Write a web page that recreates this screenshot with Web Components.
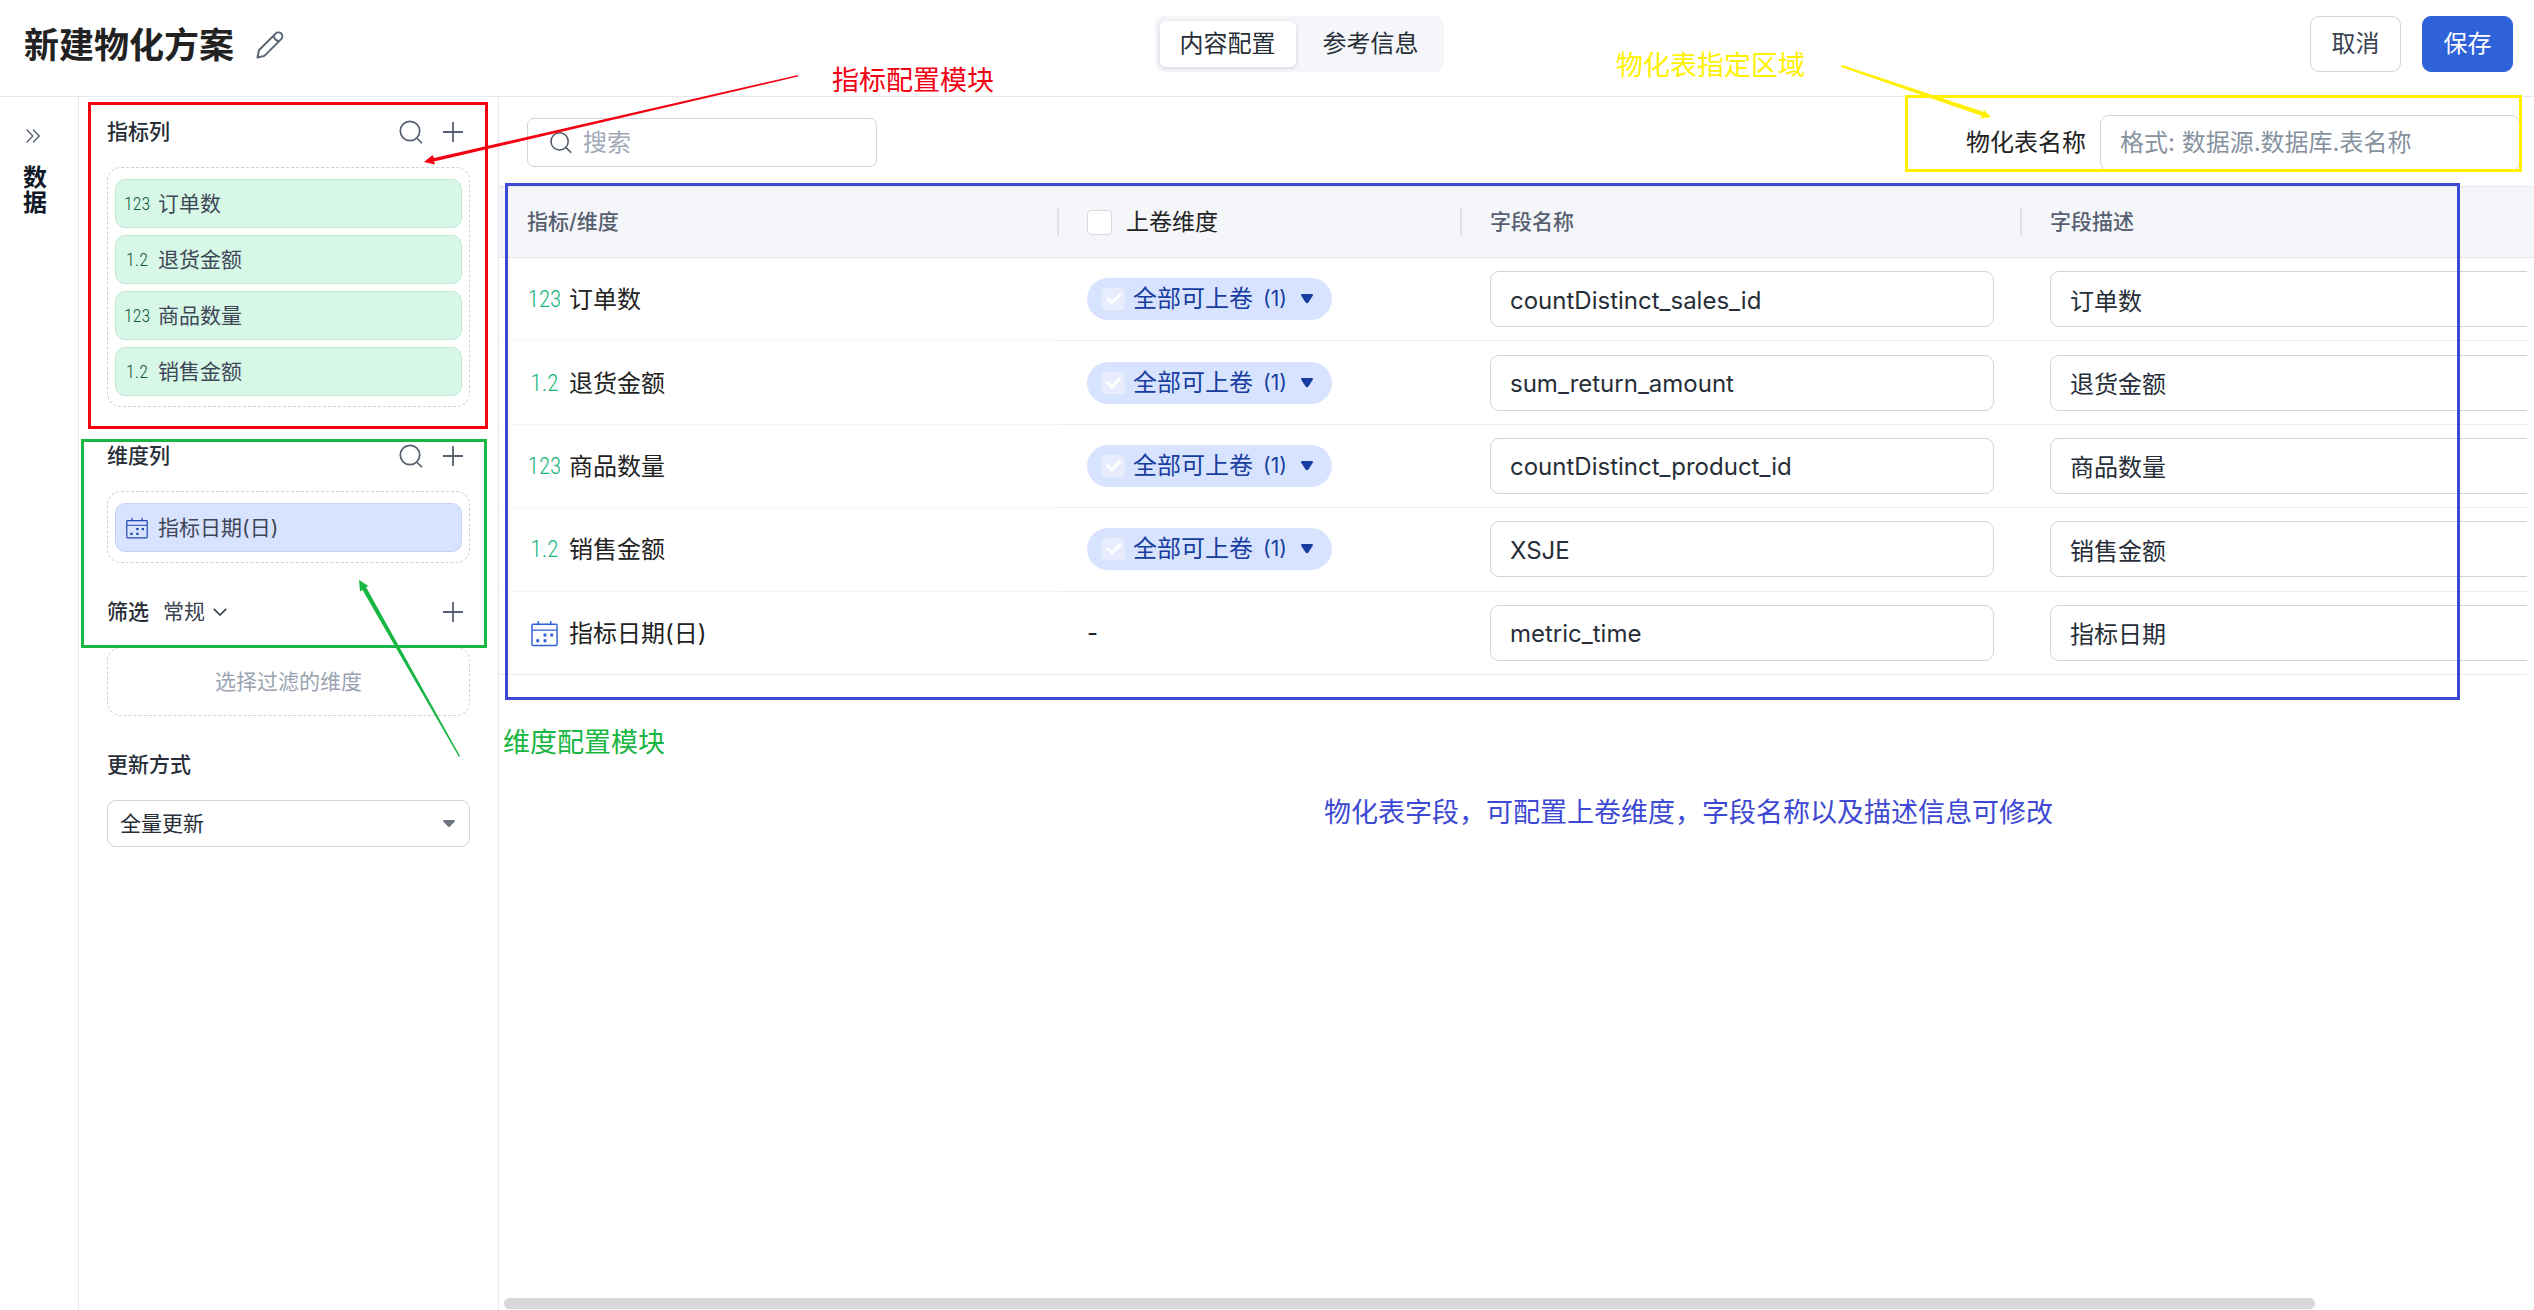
<!DOCTYPE html>
<html lang="zh-CN">
<head>
<meta charset="utf-8">
<title>新建物化方案</title>
<style>
  html, body { margin: 0; height: 100%; }
  body {
    --line: #e5e7eb;
    --field-line: #ced4de;
    --ink: #272e38;
    --muted: #566070;
    position: relative;
    overflow: hidden;
    background: #fff;
    color: #222;
    font-family: "Inter", "Noto Sans CJK SC", sans-serif;
    font-size: 24px;
    line-height: 32px;
  }
</style>
</head>
<body>
<plan-page>
  <plan-header slot="header" heading="新建物化方案"></plan-header>
  <data-rail slot="rail"></data-rail>
  <config-panel slot="panel">
    <panel-section label="指标列" search add>
      <drop-zone>
        <field-chip kind="int">订单数</field-chip>
        <field-chip kind="dec">退货金额</field-chip>
        <field-chip kind="int">商品数量</field-chip>
        <field-chip kind="dec">销售金额</field-chip>
      </drop-zone>
    </panel-section>
    <panel-section label="维度列" search add>
      <drop-zone><field-chip kind="date">指标日期(日)</field-chip></drop-zone>
    </panel-section>
    <panel-section label="筛选" add>
      <mode-picker slot="extra"></mode-picker>
      <drop-zone empty>选择过滤的维度</drop-zone>
    </panel-section>
    <panel-section label="更新方式"><update-select></update-select></panel-section>
  </config-panel>
  <table-toolbar></table-toolbar>
  <field-table></field-table>
</plan-page>
<note-layer></note-layer>

<script>
const ICONS = {
  search: '<svg width="24" height="24" viewBox="0 0 24 24" fill="none" stroke="currentColor" stroke-width="1.7"><circle cx="11" cy="11" r="9.7"/><path d="M17.6 18 23 23.2"/></svg>',
  searchSmall: '<svg width="22" height="22" viewBox="0 0 22 22" fill="none" stroke="currentColor" stroke-width="1.5"><circle cx="9.6" cy="9.4" r="8.6"/><path d="m15.8 15.4 5.4 5.4"/></svg>',
  plus: '<svg width="20" height="20" viewBox="0 0 20 20" fill="none" stroke="currentColor" stroke-width="1.8"><path d="M10 0v20M0 10h20"/></svg>',
  pencil: '<svg width="28" height="28" viewBox="0 0 28 28" fill="none" stroke="currentColor" stroke-width="2" stroke-linejoin="round"><path d="m1.5 26.5 1.4-7.2L19.6 2.6a3.8 3.8 0 0 1 5.6 5.5L8.4 24.9Z"/><path d="m17.2 5 2.2 3.6 3.5 1.9"/></svg>',
  expand: '<svg width="14" height="14" viewBox="0 0 14 14" fill="none" stroke="currentColor" stroke-width="1.4"><path d="m.6.6 6.2 6.4-6.2 6.4M7 .6 13.2 7 7 13.4"/></svg>',
  chevron: '<svg width="14" height="8" viewBox="0 0 14 8" fill="none" stroke="currentColor" stroke-width="1.7"><path d="m.8.8 6.2 6.2L13.2.8"/></svg>',
  caret: '<svg width="12" height="10" viewBox="0 0 12 10" fill="currentColor"><path d="M1.4 0h9.2c1.3 0 1.8 1.2 1 2.1L7.4 8.6c-.8 1-2 1-2.8 0L.4 2.1C-.4 1.2.1 0 1.4 0Z"/></svg>',
  caretSmall: '<svg width="12" height="8" viewBox="0 0 12 8" fill="currentColor"><path d="M1 0h10c1 0 1.3.8.7 1.4L7 6.5c-.6.6-1.4.6-2 0L.3 1.4C-.3.8 0 0 1 0Z"/></svg>',
  date: '<svg viewBox="0 0 28 28" fill="none" stroke="currentColor" stroke-width="1.5"><rect x="1" y="4.5" width="26" height="22" rx="1"/><path d="M1 10.5h26M7.5 1v4.5M20.5 1v4.5"/><path fill="currentColor" stroke="none" d="M13 14h3v3h-3zM20 14h3v3h-3zM5.5 20h3v3h-3zM13 20h3v3h-3z"/></svg>'
};
const BASE = `<style>
  :host { display: block; box-sizing: border-box; }
  *, *::before, *::after { box-sizing: border-box; }
  svg { display: block; flex: none; }
  button, input, select { font: inherit; color: inherit; margin: 0; }
  button { display: flex; align-items: center; justify-content: center; padding: 0; border: 0; background: none; white-space: nowrap; }
</style>`;
function define(name, render) {
  customElements.define(name, class extends HTMLElement {
    constructor() { super(); this.attachShadow({ mode: 'open' }); }
    connectedCallback() { this.shadowRoot.innerHTML = BASE + render(this); }
  });
}

define('plan-page', () => `<style>
  :host { display: flex; flex-direction: column; height: 100vh; }
  .body { display: flex; flex: 1; min-height: 0; }
  main { display: flex; flex-direction: column; flex: 1; min-width: 0; }
</style>
<slot name="header"></slot>
<div class="body"><slot name="rail"></slot><slot name="panel"></slot><main><slot></slot></main></div>`);

define('plan-header', el => `<style>
  :host { display: block; border-bottom: 1px solid var(--line); }
  header { display: flex; align-items: center; justify-content: space-between; height: 96px; padding: 0 21px 8px 24px; }
  .name { display: flex; align-items: center; gap: 22px; padding: 2px 4px 0 0; }
  h1 { margin: 0; font-size: 35px; line-height: 48px; font-weight: 600; }
  .edit { color: #5b6475; }
  nav { display: flex; gap: 7px; padding: 5px; border-radius: 9px; background: #f5f6f9; color: var(--ink); }
  nav button { height: 46px; padding: 0 20px; border-radius: 6px; }
  nav button[aria-selected=true] { background: #fff; box-shadow: 0 1px 4px rgba(30, 41, 59, .18); }
  .actions { display: flex; gap: 21px; }
  .actions button { min-width: 91px; height: 56px; border: 1px solid var(--field-line); border-radius: 9px; color: #3b4452; }
  .actions .save { border-color: #2f61d8; background: #2f61d8; color: #fff; }
</style>
<header>
  <div class="name"><h1>${el.getAttribute('heading')}</h1><button class="edit" aria-label="编辑名称">${ICONS.pencil}</button></div>
  <nav role="tablist"><button role="tab" aria-selected="true">内容配置</button><button role="tab" aria-selected="false">参考信息</button></nav>
  <div class="actions"><button>取消</button><button class="save">保存</button></div>
</header>`);

define('data-rail', () => `<style>
  :host { display: flex; flex-direction: column; flex: none; gap: 22px; width: 79px; padding: 32px 0 0 23px; border-right: 1px solid var(--line); }
  button { width: 20px; height: 14px; color: #5b6475; }
  span { width: 24px; word-break: break-all; line-height: 25px; font-weight: 600; color: #111827; }
</style><button aria-label="展开">${ICONS.expand}</button><span>数据</span>`);

define('config-panel', () => `<style>
  :host { display: flex; flex-direction: column; flex: none; gap: 14px; width: 420px; padding: 0 28px; border-right: 1px solid var(--line); font-size: 21px; line-height: 28px; }
</style><slot></slot>`);

define('panel-section', el => `<style>
  header { display: flex; align-items: center; gap: 14px; height: 70px; padding-right: 7px; }
  h2 { margin: 0; font-size: 21px; line-height: 28px; font-weight: 500; color: var(--ink); }
  .tools { display: flex; align-items: center; gap: 20px; margin-left: auto; color: #566070; }
</style>
<header><h2>${el.getAttribute('label')}</h2><slot name="extra"></slot><div class="tools">
  ${el.hasAttribute('search') ? `<button aria-label="搜索">${ICONS.search}</button>` : ''}
  ${el.hasAttribute('add') ? `<button aria-label="添加">${ICONS.plus}</button>` : ''}
</div></header><slot></slot>`);

define('drop-zone', () => `<style>
  :host { display: flex; flex-direction: column; gap: 7px; padding: 11px 7px 10px; border: 1px dashed #cdd1d9; border-radius: 14px; }
  :host([empty]) { align-items: center; padding: 20px 7px; color: #9aa3b2; line-height: 27px; }
</style><slot></slot>`);

define('type-icon', el => {
  const kind = el.getAttribute('kind');
  return `<style>
  :host { display: flex; align-items: center; justify-content: center; flex: none; font-family: "Liberation Sans Narrow", "Roboto Condensed", "Roboto", sans-serif; font-weight: 300; }
  svg { width: 100%; }
</style>${kind === 'date' ? ICONS.date : kind === 'int' ? '<span>123</span>' : '<span>1.2</span>'}`;
});

define('field-chip', el => {
  const date = el.getAttribute('kind') === 'date';
  return `<style>
  :host { display: flex; align-items: center; gap: 9px; height: 49px; padding: 0 9px; border: 1px solid ${date ? '#c5d2f0' : '#c3e6d6'}; border-radius: 10px; background: ${date ? '#d8e3ff' : '#d7f7e7'}; color: #3f4757; }
  type-icon { width: 24px; font-size: 18px; color: ${date ? '#1f48b0' : '#12583c'}; }
  type-icon[kind=date] { width: 22px; margin: 0 1px; }
</style><type-icon kind="${el.getAttribute('kind')}"></type-icon><span><slot></slot></span>`;
});

define('mode-picker', () => `<style>
  :host { display: flex; }
  label { display: flex; align-items: center; gap: 8px; color: #3b4452; }
  select { appearance: none; padding: 0; border: 0; background: none; }
</style><label><select aria-label="筛选模式"><option>常规</option></select>${ICONS.chevron}</label>`);

define('update-select', () => `<style>
  .box { display: grid; align-items: center; height: 47px; border: 1px solid var(--field-line); border-radius: 9px; }
  select, svg { grid-area: 1 / 1; }
  select { appearance: none; width: 100%; height: 45px; padding: 0 36px 0 12px; border: 0; background: none; color: var(--ink); }
  svg { justify-self: end; margin-right: 14px; color: #6b7280; pointer-events: none; }
</style><div class="box"><select aria-label="更新方式"><option>全量更新</option></select>${ICONS.caretSmall}</div>`);

define('table-toolbar', () => `<style>
  :host { display: flex; align-items: center; justify-content: space-between; flex: none; height: 89px; padding: 2px 14px 0 28px; }
  label { display: flex; align-items: center; }
  .search { gap: 11px; width: 350px; height: 49px; padding: 0 22px; border: 1px solid var(--field-line); border-radius: 7px; color: #4b5563; }
  .search input { flex: 1; min-width: 0; padding: 0; border: 0; background: none; }
  .search input::placeholder { color: #a0a8b6; }
  .target { gap: 14px; }
  .target input { width: 420px; height: 56px; padding: 0 19px; border: 1px solid var(--field-line); border-radius: 9px; background: none; }
  .target input::placeholder { color: #87929f; }
</style>
<label class="search">${ICONS.searchSmall}<input type="text" placeholder="搜索" aria-label="搜索"></label>
<label class="target">物化表名称<input type="text" placeholder="格式: 数据源.数据库.表名称"></label>`);

define('roll-pill', () => `<style>
  :host { display: inline-flex; align-items: center; gap: 7px; height: 42px; padding: 0 19px 0 14px; border-radius: 21px; background: #d8e3ff; color: #173d9e; vertical-align: middle; }
  input { appearance: none; display: flex; align-items: center; justify-content: center; width: 25px; height: 24px; border: 1px solid #dbe3f7; border-radius: 4px; background: #e7edff; }
  input::before { content: ""; width: 8px; height: 14px; margin-bottom: 4px; border: solid #fff; border-width: 0 3px 3px 0; transform: rotate(45deg); }
  button { gap: 10px; }
  small { font-size: 21px; }
  svg { margin-left: 4px; }
</style><input type="checkbox" checked disabled aria-label="全部可上卷"><button>全部可上卷<small>(1)</small>${ICONS.caret}</button>`);

const ROWS = [
  ['int', '订单数', 'countDistinct_sales_id', '订单数'],
  ['dec', '退货金额', 'sum_return_amount', '退货金额'],
  ['int', '商品数量', 'countDistinct_product_id', '商品数量'],
  ['dec', '销售金额', 'XSJE', '销售金额'],
  ['date', '指标日期(日)', 'metric_time', '指标日期']
];
define('field-table', () => `<style>
  :host { display: flex; flex-direction: column; justify-content: space-between; flex: 1; min-height: 0; }
  .view { display: flex; }
  .clip { flex: 1; min-width: 0; overflow: hidden; }
  .gutter { flex: none; width: 7px; height: 72px; border: solid var(--line); border-width: 1px 0; background: #f5f6f9; }
  table { width: 2083px; height: 489px; table-layout: fixed; border-collapse: separate; border-spacing: 0; }
  .wide { width: 560px; } .roll { width: 403px; }
  th { height: 72px; padding: 0; border: solid var(--line); border-width: 1px 0; background: #f5f6f9; font-size: 21px; line-height: 28px; font-weight: 500; color: var(--muted); text-align: left; }
  .head { display: flex; align-items: center; justify-content: space-between; height: 28px; padding-left: 28px; border-right: 2px solid #dfe1e7; }
  th:last-child .head { border: 0; }
  .all { display: flex; align-items: center; gap: 14px; font-size: 23px; font-weight: 400; color: #222; }
  .all input { appearance: none; width: 25px; height: 25px; border: 1px solid #d5d9e0; border-radius: 4px; background: #fff; }
  td { padding: 0 28px; border-bottom: 1px solid #ebecef; }
  td:first-child { border-color: #f6f7f8; }
  tr:last-child td { border-color: #e8eaed; }
  .name { display: flex; align-items: center; gap: 7px; padding-top: 2px; }
  type-icon { width: 35px; font-size: 23px; color: #16b57c; }
  type-icon[kind=date] { padding: 0 4px; color: #2f61d8; }
  td input { display: block; width: 100%; height: 56px; padding: 2px 19px 0; border: 1px solid var(--field-line); border-radius: 9px; background: none; color: var(--ink); }
  td:last-child input { padding-top: 0; font-family: "Noto Sans CJK SC", sans-serif; }
  .bar { flex: none; width: 89%; height: 11px; margin: 0 0 1px 5px; border-radius: 6px; background: #d8d8d8; }
</style>
<div class="view"><div class="clip"><table>
<colgroup><col class="wide"><col class="roll"><col class="wide"><col class="wide"></colgroup>
<thead><tr>
  <th><div class="head">指标/维度</div></th>
  <th><div class="head"><label class="all"><input type="checkbox">上卷维度</label></div></th>
  <th><div class="head">字段名称</div></th>
  <th><div class="head">字段描述</div></th>
</tr></thead>
<tbody>${ROWS.map(([kind, name, field, desc]) => `<tr>
  <td><div class="name"><type-icon kind="${kind}"></type-icon><span>${name}</span></div></td>
  <td>${kind === 'date' ? '-' : '<roll-pill></roll-pill>'}</td>
  <td><input type="text" value="${field}" aria-label="${name} 字段名称"></td>
  <td><input type="text" value="${desc}" aria-label="${name} 字段描述"></td>
</tr>`).join('')}</tbody></table></div><div class="gutter"></div></div>
<div class="bar"></div>`);

define('note-layer', () => `<style>
  :host { position: absolute; inset: 0; pointer-events: none; }
  svg { position: absolute; width: 100%; height: 100%; }
  rect { fill: none; stroke-width: 3; }
  span { position: absolute; font-size: 27px; line-height: 36px; white-space: nowrap; }
</style>
<svg>
  <rect x="89.5" y="103.5" width="397" height="324" stroke="#f40012"/>
  <rect x="82.5" y="440.5" width="403" height="206" stroke="#18b642"/>
  <rect x="506.5" y="184.5" width="1952" height="514" stroke="#3e49d3"/>
  <rect x="1906.5" y="96.5" width="614" height="74" stroke="#fff000"/>
  <polygon fill="#f40012" points="798,75 798,76.500 434,161.500 435,164.500 424,162 432.500,155 434,158"/>
  <polygon fill="#18b642" points="460,756 459,757 362.500,590 360,591.500 359,580 368.500,586 366,587"/>
  <polygon fill="#fff000" points="1842,65 1841,67 1982,116 1980,118.500 1991,117 1983,109 1984,112"/>
</svg>
<span style="left:832px;top:63px;color:#f40012">指标配置模块</span>
<span style="left:503px;top:725px;color:#18b642">维度配置模块</span>
<span style="left:1616px;top:48px;color:#fff000">物化表指定区域</span>
<span style="left:1324px;top:795px;color:#3e49d3">物化表字段，可配置上卷维度，字段名称以及描述信息可修改</span>`);
</script>
</body>
</html>
